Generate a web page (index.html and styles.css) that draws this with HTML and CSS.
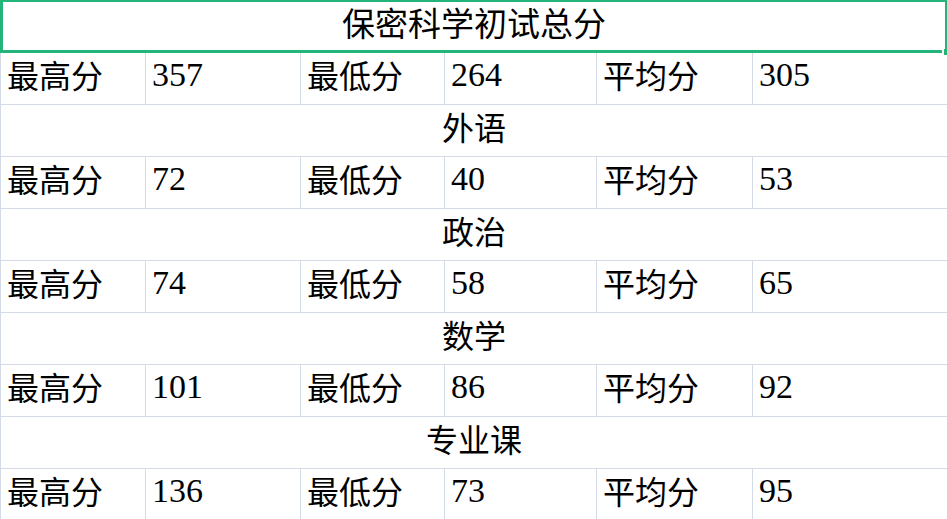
FILE: index.html
```html
<!DOCTYPE html>
<html lang="zh">
<head>
<meta charset="utf-8">
<title>保密科学初试总分</title>
<link rel="stylesheet" href="styles.css">
</head>
<body>
<div class="sheet">
  <div class="title"><span>保密科学初试总分</span><i class="handle"></i></div>

  <div class="row data">
    <div class="cell label">最高分</div><div class="cell num">357</div>
    <div class="cell label">最低分</div><div class="cell num">264</div>
    <div class="cell label">平均分</div><div class="cell num">305</div>
  </div>
  <div class="row head"><div class="cell label center">外语</div></div>
  <div class="row data">
    <div class="cell label">最高分</div><div class="cell num">72</div>
    <div class="cell label">最低分</div><div class="cell num">40</div>
    <div class="cell label">平均分</div><div class="cell num">53</div>
  </div>
  <div class="row head"><div class="cell label center">政治</div></div>
  <div class="row data">
    <div class="cell label">最高分</div><div class="cell num">74</div>
    <div class="cell label">最低分</div><div class="cell num">58</div>
    <div class="cell label">平均分</div><div class="cell num">65</div>
  </div>
  <div class="row head"><div class="cell label center">数学</div></div>
  <div class="row data">
    <div class="cell label">最高分</div><div class="cell num">101</div>
    <div class="cell label">最低分</div><div class="cell num">86</div>
    <div class="cell label">平均分</div><div class="cell num">92</div>
  </div>
  <div class="row head"><div class="cell label center">专业课</div></div>
  <div class="row data">
    <div class="cell label">最高分</div><div class="cell num">136</div>
    <div class="cell label">最低分</div><div class="cell num">73</div>
    <div class="cell label">平均分</div><div class="cell num">95</div>
  </div>
</div>
</body>
</html>
```

FILE: styles.css
```css
html, body {
  margin: 0;
  padding: 0;
  background: #ffffff;
}

.sheet {
  width: 947px;
  color: #000000;
}

.title {
  position: relative;
  box-sizing: border-box;
  height: 53px;
  border: 2px solid #22b478;
  border-left-width: 3px;
  border-bottom-width: 3px;
  font-family: "Liberation Sans", "Noto Sans CJK SC", sans-serif;
  font-size: 33px;
  line-height: 33px;
  text-align: center;
  padding-top: 6px;
}

.handle {
  position: absolute;
  right: -2px;
  bottom: -5px;
  width: 3px;
  height: 6px;
  background: #22b478;
  border-left: 2px solid #ffffff;
}

.row {
  display: grid;
  height: 52px;
  box-sizing: border-box;
  border-bottom: 1px solid #d4dbe7;
  border-left: 1px solid #d4dbe7;
}

.data {
  grid-template-columns: 145px 155px 144px 152px 156px 194px;
}

.head {
  grid-template-columns: 1fr;
}

.cell {
  box-sizing: border-box;
  padding-left: 6px;
  font-size: 32px;
  line-height: 32px;
  white-space: nowrap;
}

.data .cell {
  border-right: 1px solid #d4dbe7;
}

.data .cell:last-child {
  border-right: none;
}

.label {
  font-family: "Noto Sans CJK SC", sans-serif;
  padding-top: 5px;
}

.num {
  font-family: "Liberation Serif", "Times New Roman", serif;
  font-size: 34px;
  padding-top: 6px;
}

.center {
  text-align: center;
  padding-left: 0;
}
```
